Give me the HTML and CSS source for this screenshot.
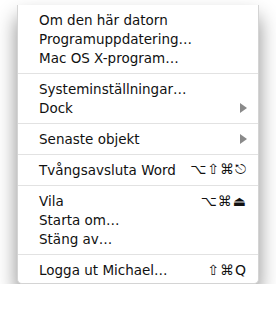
FILE: index.html
```html
<!DOCTYPE html>
<html>
<head>
    <title>Apple-menyn</title>
    <link rel="stylesheet" href="styles.css">
</head>
<body>
    <div class="menu">
        <div class="item"><span>Om den här datorn</span></div>
        <div class="item"><span>Programuppdatering…</span></div>
        <div class="item"><span>Mac OS X-program…</span></div>
        <div class="sep"></div>
        <div class="item"><span>Systeminställningar…</span></div>
        <div class="item"><span>Dock</span><span class="arrow"></span></div>
        <div class="sep"></div>
        <div class="item"><span>Senaste objekt</span><span class="arrow"></span></div>
        <div class="sep"></div>
        <div class="item"><span>Tvångsavsluta Word</span><span class="keys">⌥⇧⌘⎋</span></div>
        <div class="sep"></div>
        <div class="item"><span>Vila</span><span class="keys">⌥⌘⏏</span></div>
        <div class="item"><span>Starta om…</span></div>
        <div class="item"><span>Stäng av…</span></div>
        <div class="sep"></div>
        <div class="item"><span>Logga ut Michael…</span><span class="keys">⇧⌘Q</span></div>
    </div>
</body>
</html>
```

FILE: styles.css
```css
body {
    margin: 0;
    background-color: #fff;
    font-family: "DejaVu Sans", sans-serif;
}
.menu {
    width: 242px;
    box-sizing: border-box;
    margin: 5px 0 0 17px;
    padding: 5px 0 4px;
    background-color: #fff;
    border: 1px solid #d4d4d4;
    border-top: 0;
    border-radius: 0 0 5px 5px;
    box-shadow: 0 12px 20px rgba(0, 0, 0, 0.45);
}
.item {
    display: flex;
    justify-content: space-between;
    align-items: center;
    height: 19px;
    padding: 0 11px 0 21px;
    font-size: 13.5px;
    color: #111;
}
.sep {
    height: 1px;
    margin: 6px 0 5px;
    background-color: #e2e2e2;
}
.arrow {
    width: 0;
    height: 0;
    border-top: 5px solid transparent;
    border-bottom: 5px solid transparent;
    border-left: 7px solid #8a8a8a;
}
.keys {
    font-size: 14px;
    letter-spacing: 1px;
}
```
